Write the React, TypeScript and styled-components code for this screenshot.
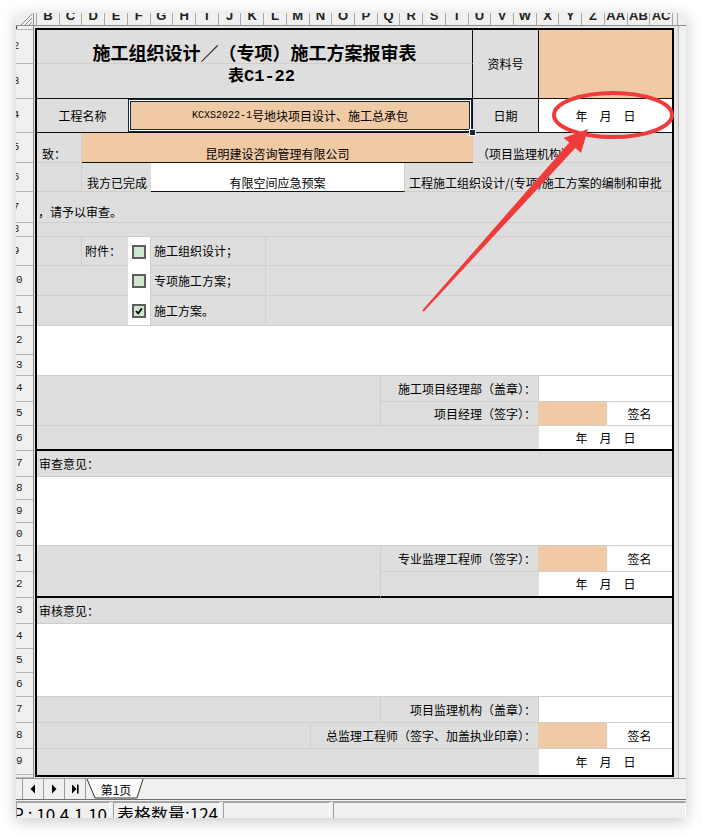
import React from "react"
import styled, { createGlobalStyle } from "styled-components"

type Line = "light" | "dark" | "thick"
type Fill = "gray" | "white" | "orange"

// row heights of sheet rows 2..29, column widths between the merged-cell edges
const ROW_HEIGHTS = [
  34, 35, 34, 30, 29, 31, 14, 29, 30, 30, 29, 21, 26, 24, 25, 26, 23, 23, 23,
  26, 26, 26, 25, 24, 24, 26, 26, 26,
]
const COL_WIDTHS = [45, 46, 23, 115, 45, 70, 24, 68, 66, 68, 65]
const LETTERS =
  "B C D E F G H I J K L M N O P Q R S T U V W X Y Z AA AB AC".split(" ")
const ROW_LABELS = [4, ...ROW_HEIGHTS, 3]

const fills: Record<Fill, string> = {
  gray: "#dedede",
  white: "#ffffff",
  orange: "#f0c9a5",
}

const lines: Record<Line, string> = {
  light: "1px solid #d3cec6",
  dark: "1px solid #111",
  thick: "2px solid #000",
}

// excel rows (inclusive) and grid column lines
const at = (r1: number, c1: number, r2: number, c2: number) =>
  `${r1 - 1} / ${c1} / ${r2} / ${c2}`

const GlobalStyle = createGlobalStyle`
  html, body {
    margin: 0;
    padding: 0;
    background: #fff;
  }
  body {
    font-family: "Noto Sans CJK SC", "Liberation Sans", sans-serif;
    color: #000;
  }
`

const Page = styled.div`
  position: relative;
  width: 702px;
  height: 835px;
  padding: 13px 0 0 16px;
  box-sizing: border-box;
  overflow: hidden;
`

const Window = styled.div`
  width: 670px;
  height: 805px;
  display: flex;
  flex-direction: column;
  background: #f0f0f0;
  overflow: hidden;
  box-shadow: 0 3px 14px rgba(0, 0, 0, 0.22);
`

const ColumnHeader = styled.div`
  display: flex;
  flex: none;
  height: 13px;
  box-sizing: border-box;
  border-bottom: 1px solid #8e8e8e;
`

const Corner = styled.div`
  width: 18px;
  flex: none;
  box-sizing: border-box;
  border-right: 1px solid #8e8e8e;
  display: flex;
  justify-content: flex-end;
  align-items: flex-end;
`

const HeadGap = styled.div`
  width: 3px;
  flex: none;
  box-sizing: border-box;
  border-right: 1px solid #a9a9a9;
`

const Letters = styled.div`
  width: 636px;
  flex: none;
  display: grid;
  grid-template-columns: repeat(28, 1fr);
`

const Letter = styled.div`
  display: flex;
  justify-content: center;
  align-items: flex-end;
  overflow: hidden;
  border-right: 1px solid #a9a9a9;
  padding-bottom: 3px;
  font: bold 13px/13px "Liberation Sans", sans-serif;
  color: #222;
`

const HeadEnd = styled.div`
  width: 5px;
  flex: none;
  box-sizing: border-box;
  border-right: 1px solid #a9a9a9;
`

const Body = styled.div`
  display: flex;
  flex: none;
  height: 752px;
`

const RowHeader = styled.div`
  width: 18px;
  flex: none;
  box-sizing: border-box;
  border-right: 1px solid #8e8e8e;
  overflow: hidden;
`

const RowNums = styled.div`
  width: 34px;
  margin-left: -17px;
  display: flex;
  flex-direction: column;
`

const RowNum = styled.div<{ $h: number }>`
  height: ${p => p.$h}px;
  flex: none;
  box-sizing: border-box;
  border-bottom: 1px solid #b4b4b4;
  display: flex;
  align-items: center;
  justify-content: center;
  overflow: hidden;
  font: 11px/11px "Liberation Mono", monospace;
  color: #222;
`

const SheetArea = styled.div`
  width: 644px;
  flex: none;
  box-sizing: border-box;
  padding: 2px 4px 1px 1px;
  background: #e5e5e5;
`

const Sheet = styled.div`
  display: grid;
  grid-template-columns: ${COL_WIDTHS.map(w => `${w}px`).join(" ")};
  grid-template-rows: ${ROW_HEIGHTS.map(h => `${h}px`).join(" ")};
  border: 2px solid #000;
  background: ${fills.gray};
`

const ScrollEdge = styled.div`
  flex: 1;
  border-left: 1px solid #b8b8b8;
  background: #f0f0f0;
`

type CellProps = {
  $at: string
  $fill?: Fill
  $x?: "flex-start" | "center" | "flex-end"
  $y?: "flex-start" | "center" | "flex-end"
  $b?: Line
  $r?: Line
  $pad?: string
}

const Cell = styled.div<CellProps>`
  grid-area: ${p => p.$at};
  display: flex;
  justify-content: ${p => p.$x ?? "flex-start"};
  align-items: ${p => p.$y ?? "center"};
  background: ${p => fills[p.$fill ?? "gray"]};
  border-bottom: ${p => (p.$b ? lines[p.$b] : "none")};
  border-right: ${p => (p.$r ? lines[p.$r] : "none")};
  padding: ${p => p.$pad ?? "0 2px"};
  box-sizing: border-box;
  min-width: 0;
  white-space: nowrap;
  font-size: 12px;
  line-height: 14px;
`

const Picked = styled(Cell)`
  position: relative;
  box-shadow: inset 0 0 0 1px #17273d, inset 0 0 0 2px #fff,
    inset 0 0 0 3px #17273d;
`

const Handle = styled.span`
  position: absolute;
  right: -4px;
  bottom: -4px;
  width: 5px;
  height: 5px;
  background: #17273d;
  border: 1px solid #fff;
  z-index: 2;
`

const Title = styled.span`
  font-size: 18px;
  line-height: 18px;
  font-weight: bold;
`

const SubTitle = styled.span`
  font-size: 16px;
  line-height: 17px;
  font-weight: bold;
`

const Latin = styled.span<{ $size: number }>`
  font-family: "Liberation Mono", monospace;
  font-size: ${p => p.$size}px;
`

const DateText = styled.span`
  display: flex;
  gap: 12px;
`

const Box = styled.span`
  width: 14px;
  height: 14px;
  box-sizing: border-box;
  border: 2px solid #5d5d5d;
  background: #cfe7cf;
  display: flex;
  align-items: center;
  justify-content: center;
`

const TabBar = styled.div`
  display: flex;
  flex: none;
  height: 21px;
  box-sizing: border-box;
  border-top: 1px solid #9a9a9a;
`

const NavGroup = styled.div`
  display: flex;
  margin-left: -14px;
`

const NavButton = styled.div`
  width: 21px;
  height: 20px;
  box-sizing: border-box;
  border-right: 1px solid #9a9a9a;
  display: flex;
  align-items: center;
  justify-content: center;
`

const Tab = styled.div`
  position: relative;
  width: 59px;
  height: 20px;
  display: flex;
  align-items: center;
  justify-content: center;
  font-size: 12px;
`

const TabOutline = styled.svg`
  position: absolute;
  left: 0;
  top: 0;
`

const TabLabel = styled.span`
  position: relative;
  margin-left: 1px;
`

const Divider = styled.div`
  flex: none;
  height: 3px;
  box-sizing: border-box;
  border-top: 1px solid #6e6e6e;
  border-bottom: 1px solid #a8a8a8;
`

const StatusBar = styled.div`
  display: flex;
  flex: 1;
  gap: 3px;
`

const StatusPanel = styled.div<{ $w?: number; $end?: boolean }>`
  ${p => (p.$w ? `width: ${p.$w}px; flex: none;` : "flex: 1;")}
  box-sizing: border-box;
  border-top: 1px solid #a0a0a0;
  border-left: 1px solid #a0a0a0;
  border-right: 1px solid #fff;
  display: flex;
  justify-content: ${p => (p.$end ? "flex-end" : "flex-start")};
  padding: 1px ${p => (p.$end ? "2px" : "3px")} 0;
  overflow: hidden;
  white-space: nowrap;
  font-size: 17px;
  line-height: 20px;
`

const Overlay = styled.svg`
  position: absolute;
  left: 0;
  top: 0;
  pointer-events: none;
`

const Tick = () => (
  <svg width="8" height="8" viewBox="0 0 8 8">
    <path d="M1 4 L3.2 6.4 L7 1.4" stroke="#000" strokeWidth="1.8" fill="none" />
  </svg>
)

const Option = ({ row, label, checked, first }: { row: number; label: string; checked?: boolean; first?: boolean }) => (
  <>
    {first ? (
      <>
        <Cell $at={at(row, 1, row, 2)} $b="light" $r="light" />
        <Cell $at={at(row, 2, row, 3)} $b="light" $pad="0 3px">
          附件：
        </Cell>
      </>
    ) : (
      <Cell $at={at(row, 1, row, 3)} $b="light" />
    )}
    <Cell $at={at(row, 3, row, 4)} $fill="white" $x="center" $r="light" $b={row === 11 ? "light" : undefined}>
      <Box>{checked && <Tick />}</Box>
    </Cell>
    <Cell $at={at(row, 4, row, 5)} $b="light" $r="light" $pad="0 3px">
      {label}
    </Cell>
    <Cell $at={at(row, 5, row, 12)} $b="light" />
  </>
)

const DateCell = ({ row, bottom }: { row: number; bottom?: Line }) => (
  <Cell $at={at(row, 10, row, 12)} $fill="white" $x="center" $b={bottom}>
    <DateText>
      <span>年</span>
      <span>月</span>
      <span>日</span>
    </DateText>
  </Cell>
)

const SignRow = ({ row, from, label }: { row: number; from: number; label: string }) => (
  <>
    <Cell $at={at(row, from, row, 10)} $x="flex-end" $b="light" $r="light" $pad="0 2px">
      {label}
    </Cell>
    <Cell $at={at(row, 10, row, 11)} $fill="orange" $b="light" />
    <Cell $at={at(row, 11, row, 12)} $fill="white" $x="center" $b="light">
      签名
    </Cell>
  </>
)

export default function App() {
  return (
    <Page>
      <GlobalStyle />
      <Window>
        <ColumnHeader>
          <Corner>
            <svg width="14" height="12" viewBox="0 0 14 12">
              <path d="M2 12 L13 1 M6 12 L13 5 M10 12 L13 9" stroke="#8a8a8a" strokeWidth="1" />
            </svg>
          </Corner>
          <HeadGap />
          <Letters>
            {LETTERS.map(l => (
              <Letter key={l}>{l}</Letter>
            ))}
          </Letters>
          <HeadEnd />
        </ColumnHeader>

        <Body>
          <RowHeader>
            <RowNums>
              {ROW_LABELS.map((h, i) => (
                <RowNum key={i} $h={h}>
                  {i < 29 ? i + 1 : ""}
                </RowNum>
              ))}
            </RowNums>
          </RowHeader>

          <SheetArea>
            <Sheet>
              <Cell $at={at(2, 1, 2, 9)} $x="center" $y="flex-end" $b="light" $r="dark" $pad="0 0 2px">
                <Title>施工组织设计／（专项）施工方案报审表</Title>
              </Cell>
              <Cell $at={at(3, 1, 3, 9)} $x="center" $y="flex-start" $b="dark" $r="dark" $pad="2px 0 0 14px">
                <SubTitle>
                  表<Latin $size={17}>C1-22</Latin>
                </SubTitle>
              </Cell>
              <Cell $at={at(2, 9, 3, 10)} $x="center" $b="dark" $r="dark">
                资料号
              </Cell>
              <Cell $at={at(2, 10, 3, 12)} $fill="orange" $b="dark" />

              <Cell $at={at(4, 1, 4, 3)} $x="center" $b="dark">
                工程名称
              </Cell>
              <Picked $at={at(4, 3, 4, 9)} $fill="orange" $x="center" $b="dark" $r="dark">
                <Latin $size={10}>KCXS2022-1</Latin>号地块项目设计、施工总承包
                <Handle />
              </Picked>
              <Cell $at={at(4, 9, 4, 10)} $x="center" $b="dark" $r="dark">
                日期
              </Cell>
              <DateCell row={4} bottom="dark" />

              <Cell $at={at(5, 1, 5, 2)} $y="flex-end" $b="light" $r="light" $pad="0 0 1px 5px">
                致：
              </Cell>
              <Cell $at={at(5, 2, 5, 9)} $fill="orange" $x="center" $y="flex-end" $b="dark" $pad="0 0 1px">
                昆明建设咨询管理有限公司
              </Cell>
              <Cell $at={at(5, 9, 5, 12)} $y="flex-end" $b="light" $pad="0 0 1px 4px">
                （项目监理机构）
              </Cell>

              <Cell $at={at(6, 1, 6, 2)} $b="light" $r="light" />
              <Cell $at={at(6, 2, 6, 4)} $y="flex-end" $b="light" $pad="0 0 1px 5px">
                我方已完成
              </Cell>
              <Cell $at={at(6, 4, 6, 8)} $fill="white" $x="center" $y="flex-end" $b="dark" $r="light" $pad="0 0 1px">
                有限空间应急预案
              </Cell>
              <Cell $at={at(6, 8, 6, 12)} $y="flex-end" $b="light" $pad="0 0 1px 4px">
                工程施工组织设计/(专项)施工方案的编制和审批
              </Cell>

              <Cell $at={at(7, 1, 7, 12)} $y="flex-end" $b="light" $pad="0 0 3px 1px">
                ，请予以审查。
              </Cell>
              <Cell $at={at(8, 1, 8, 12)} $b="light" />

              <Option row={9} label="施工组织设计；" first />
              <Option row={10} label="专项施工方案；" />
              <Option row={11} label="施工方案。" checked />

              <Cell $at={at(12, 1, 13, 12)} $fill="white" $b="light" />

              <Cell $at={at(14, 1, 15, 7)} $b="light" $r="light" />
              <Cell $at={at(14, 7, 14, 10)} $x="flex-end" $b="light" $r="light">
                施工项目经理部（盖章）：
              </Cell>
              <Cell $at={at(14, 10, 14, 12)} $fill="white" $b="light" />
              <SignRow row={15} from={7} label="项目经理（签字）：" />
              <Cell $at={at(16, 1, 16, 10)} $b="thick" />
              <DateCell row={16} bottom="thick" />

              <Cell $at={at(17, 1, 17, 12)} $b="light" $pad="0 2px 0 2px">
                审查意见：
              </Cell>
              <Cell $at={at(18, 1, 20, 12)} $fill="white" $b="light" />

              <Cell $at={at(21, 1, 22, 7)} $b="thick" $r="light" />
              <SignRow row={21} from={7} label="专业监理工程师（签字）：" />
              <Cell $at={at(22, 7, 22, 10)} $b="thick" />
              <DateCell row={22} bottom="thick" />

              <Cell $at={at(23, 1, 23, 12)} $b="light" $pad="0 2px 0 2px">
                审核意见：
              </Cell>
              <Cell $at={at(24, 1, 26, 12)} $fill="white" $b="light" />

              <Cell $at={at(27, 1, 27, 7)} $b="light" $r="light" />
              <Cell $at={at(27, 7, 27, 10)} $x="flex-end" $b="light" $r="light">
                项目监理机构（盖章）：
              </Cell>
              <Cell $at={at(27, 10, 27, 12)} $fill="white" $b="light" />
              <Cell $at={at(28, 1, 28, 6)} $b="light" $r="light" />
              <SignRow row={28} from={6} label="总监理工程师（签字、加盖执业印章）：" />
              <Cell $at={at(29, 1, 29, 10)} />
              <DateCell row={29} />
            </Sheet>
          </SheetArea>

          <ScrollEdge />
        </Body>

        <TabBar>
          <NavGroup>
            <NavButton>
              <svg width="10" height="10" viewBox="0 0 10 10">
                <path d="M2 1 V9 M8 1 L3.5 5 L8 9 Z" stroke="#000" fill="#000" />
              </svg>
            </NavButton>
            <NavButton>
              <svg width="10" height="10" viewBox="0 0 10 10">
                <path d="M7 0.5 L2.5 5 L7 9.5 Z" fill="#000" />
              </svg>
            </NavButton>
            <NavButton>
              <svg width="10" height="10" viewBox="0 0 10 10">
                <path d="M3 0.5 L7.5 5 L3 9.5 Z" fill="#000" />
              </svg>
            </NavButton>
            <NavButton>
              <svg width="10" height="10" viewBox="0 0 10 10">
                <path d="M2 0.5 L6.5 5 L2 9.5 Z" fill="#000" />
                <rect x="7" y="0.5" width="1.6" height="9" fill="#000" />
              </svg>
            </NavButton>
          </NavGroup>
          <Tab>
            <TabOutline width="59" height="20" viewBox="0 0 59 20">
              <path d="M1 0 L9 19 L51 19 L57 0" fill="#fbfbfb" stroke="#333" strokeWidth="1" />
            </TabOutline>
            <TabLabel>第1页</TabLabel>
          </Tab>
        </TabBar>
        <Divider />
        <StatusBar>
          <StatusPanel $w={94} $end>
            IP : 10.4.1.10
          </StatusPanel>
          <StatusPanel $w={107}>表格数量:124</StatusPanel>
          <StatusPanel $w={107} />
          <StatusPanel />
        </StatusBar>
      </Window>

      <Overlay width="702" height="835" viewBox="0 0 702 835">
        <ellipse cx="613" cy="115" rx="59" ry="22" fill="none" stroke="#f03b3b" strokeWidth="4" />
        <polygon
          points="588,129 563.5,138 569.3,142.6 422.3,310.3 423.7,311.7 575.3,148 581,153"
          fill="#f03b3b"
        />
      </Overlay>
    </Page>
  )
}
